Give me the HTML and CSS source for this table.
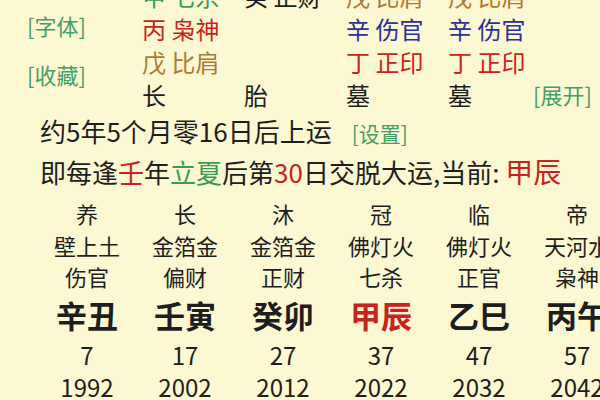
FILE: index.html
```html
<!DOCTYPE html>
<html lang="zh-CN">
<head>
<meta charset="utf-8">
<link rel="stylesheet" href="styles.css">
</head>
<body>
<div class="page">
  <div class="top">
    <div class="labels">
      <span class="link">[字体]</span>
      <span class="link second">[收藏]</span>
    </div>
    <div class="pillars">
      <span class="green">甲 七杀</span>
      <span class="dark">癸 正财</span>
      <span class="brown">戊 比肩</span>
      <span class="brown">戊 比肩</span>
      <span></span>

      <span class="red">丙 枭神</span>
      <span></span>
      <span class="blue">辛 伤官</span>
      <span class="blue">辛 伤官</span>
      <span></span>

      <span class="brown">戊 比肩</span>
      <span></span>
      <span class="red">丁 正印</span>
      <span class="red">丁 正印</span>
      <span></span>

      <span class="dark">长</span>
      <span class="dark">胎</span>
      <span class="dark">墓</span>
      <span class="dark">墓</span>
      <span class="link expand">[展开]</span>
    </div>
  </div>

  <div class="info">
    <p class="line">约5年5个月零16日后上运<span class="link small">[设置]</span></p>
    <p class="line">即每逢<span class="red">壬</span>年<span class="green">立夏</span>后第<span class="red">30</span>日交脱大运,当前: <span class="red big">甲辰</span></p>
  </div>

  <div class="dayun">
    <div class="col"><span class="r1">养</span><span class="r2">壁上土</span><span class="r3">伤官</span><span class="r4">辛丑</span><span class="r5">7</span><span class="r6">1992</span></div>
    <div class="col"><span class="r1">长</span><span class="r2">金箔金</span><span class="r3">偏财</span><span class="r4">壬寅</span><span class="r5">17</span><span class="r6">2002</span></div>
    <div class="col"><span class="r1">沐</span><span class="r2">金箔金</span><span class="r3">正财</span><span class="r4">癸卯</span><span class="r5">27</span><span class="r6">2012</span></div>
    <div class="col"><span class="r1">冠</span><span class="r2">佛灯火</span><span class="r3">七杀</span><span class="r4 red">甲辰</span><span class="r5">37</span><span class="r6">2022</span></div>
    <div class="col"><span class="r1">临</span><span class="r2">佛灯火</span><span class="r3">正官</span><span class="r4">乙巳</span><span class="r5">47</span><span class="r6">2032</span></div>
    <div class="col"><span class="r1">帝</span><span class="r2">天河水</span><span class="r3">枭神</span><span class="r4">丙午</span><span class="r5">57</span><span class="r6">2042</span></div>
  </div>
</div>
</body>
</html>
```

FILE: styles.css
```css
html, body {
  margin: 0;
  padding: 0;
}
body {
  background: #fcf8d2;
  font-family: "Noto Sans CJK SC", "Noto Sans", sans-serif;
  color: #1e1e1e;
  width: 600px;
  height: 400px;
  overflow: hidden;
}
.page {
  width: 600px;
}
.top {
  display: flex;
  margin-top: -21px;
}
.labels {
  width: 142px;
  box-sizing: border-box;
  padding-left: 27px;
  padding-top: 30px;
  display: flex;
  flex-direction: column;
  align-items: flex-start;
}
.labels .link {
  font-size: 22px;
  line-height: 33px;
}
.labels .second {
  margin-top: 16px;
}
.pillars {
  display: grid;
  grid-template-columns: repeat(4, 102px) auto;
  grid-auto-rows: 33px;
  font-size: 24px;
  line-height: 33px;
  white-space: nowrap;
}
.link {
  color: #44a066;
}
.expand {
  font-size: 22px;
  margin-left: -17px;
}
.green { color: #3a9a58; }
.red { color: #c9231e; }
.blue { color: #2b2f9c; }
.brown { color: #b07a33; }
.dark { color: #1e1e1e; }

.info {
  padding-left: 40px;
  font-size: 26px;
}
.line {
  margin: 0;
  height: 40px;
  line-height: 40px;
  white-space: nowrap;
}
.small {
  font-size: 21px;
  margin-left: 20px;
}
.big {
  font-size: 28px;
}

.dayun {
  display: grid;
  grid-template-columns: repeat(6, 98px);
  margin-left: 38px;
  padding-top: 6px;
}
.col {
  display: flex;
  flex-direction: column;
  align-items: center;
  white-space: nowrap;
  font-size: 22px;
}
.col span {
  display: block;
  text-align: center;
}
.r1, .r2 { height: 32px; line-height: 32px; }
.r3 { height: 30px; line-height: 30px; }
.r4 { height: 48px; line-height: 48px; font-size: 31px; font-weight: bold; }
.r5 { height: 32px; line-height: 32px; font-size: 24px; }
.r6 { height: 32px; line-height: 32px; font-size: 24px; }
```
